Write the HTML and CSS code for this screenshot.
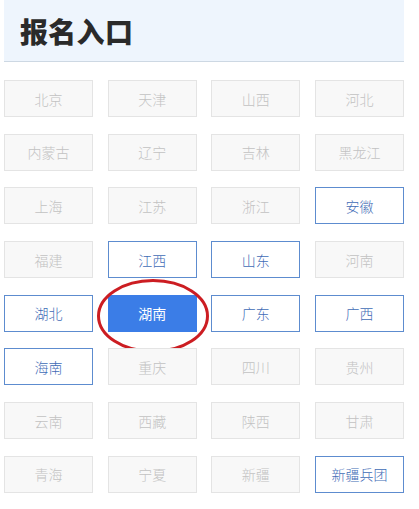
FILE: index.html
```html
<!DOCTYPE html>
<html lang="zh-CN">

<head>
  <meta charset="UTF-8">
  <meta name="viewport" content="width=device-width, initial-scale=1.0">
  <title>报名入口</title>
  <link rel="stylesheet" href="styles.css">
</head>

<body>
  <div class="wrap">
    <header class="title-bar">
      <h1>报名入口</h1>
    </header>

    <div class="region-grid">
      <span class="region off">北京</span>
      <span class="region off">天津</span>
      <span class="region off">山西</span>
      <span class="region off">河北</span>

      <span class="region off">内蒙古</span>
      <span class="region off">辽宁</span>
      <span class="region off">吉林</span>
      <span class="region off">黑龙江</span>

      <span class="region off">上海</span>
      <span class="region off">江苏</span>
      <span class="region off">浙江</span>
      <span class="region on">安徽</span>

      <span class="region off">福建</span>
      <span class="region on">江西</span>
      <span class="region on">山东</span>
      <span class="region off">河南</span>

      <span class="region on">湖北</span>
      <span class="region selected">湖南
        <svg class="circle-mark" viewBox="0 0 114 76">
          <ellipse cx="57" cy="38" rx="54.5" ry="35.5" fill="none" stroke="#cc1d22" stroke-width="3" />
        </svg>
      </span>
      <span class="region on">广东</span>
      <span class="region on">广西</span>

      <span class="region on">海南</span>
      <span class="region off">重庆</span>
      <span class="region off">四川</span>
      <span class="region off">贵州</span>

      <span class="region off">云南</span>
      <span class="region off">西藏</span>
      <span class="region off">陕西</span>
      <span class="region off">甘肃</span>

      <span class="region off">青海</span>
      <span class="region off">宁夏</span>
      <span class="region off">新疆</span>
      <span class="region on">新疆兵团</span>
    </div>
  </div>
</body>

</html>
```

FILE: styles.css
```css
body {
  font-family: "Noto Sans CJK SC", "Noto Sans", sans-serif;
  background: #ffffff;
  margin: 0;
  padding: 0;
}

.wrap {
  width: 400px;
  margin-left: 4px;
}

.title-bar {
  background-color: #eef5fd;
  border-bottom: 1px solid #cdd8e3;
  height: 62px;
  display: flex;
  align-items: center;
  padding-left: 16px;
  box-sizing: border-box;
}

.title-bar h1 {
  margin: 0;
  font-size: 28px;
  font-weight: 900;
  color: #2a2a2a;
  letter-spacing: 0.3px;
}

.region-grid {
  display: grid;
  grid-template-columns: repeat(4, 1fr);
  column-gap: 14.6px;
  row-gap: 16.7px;
  margin-top: 18px;
}

.region {
  position: relative;
  height: 37px;
  display: flex;
  align-items: center;
  justify-content: center;
  box-sizing: border-box;
  font-size: 14px;
  font-weight: 300;
}

.off {
  background-color: #f8f8f8;
  border: 1px solid #e4e4e4;
  color: #c2c2c2;
}

.on {
  background-color: #ffffff;
  border: 1px solid #5d8ccf;
  color: #3f6cb6;
}

.selected {
  background-color: #3b7de7;
  border: 1px solid #3b7de7;
  color: #ffffff;
  font-weight: 400;
}

.circle-mark {
  position: absolute;
  left: -13px;
  top: -18px;
  width: 114px;
  height: 76px;
  pointer-events: none;
}
```
